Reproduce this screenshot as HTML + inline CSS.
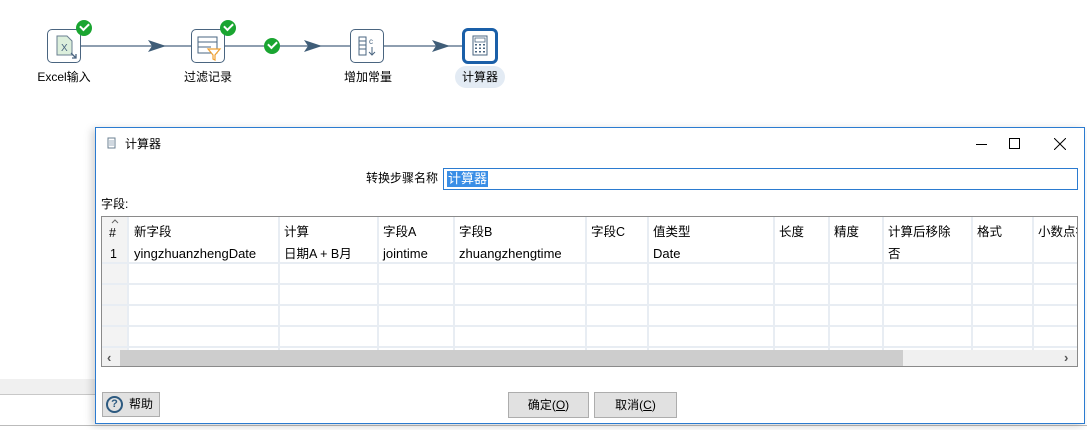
<!DOCTYPE html>
<html><head><meta charset="utf-8"><style>
*{margin:0;padding:0;box-sizing:border-box}
body{width:1087px;height:430px;position:relative;background:#fff;font-family:"Liberation Sans","Noto Sans CJK SC",sans-serif;font-size:12px;line-height:16px;color:#000;overflow:hidden}
.abs{position:absolute}
.lbl{position:absolute;top:69px;font-size:12px;white-space:nowrap;transform:translateX(-50%)}
.box{position:absolute;width:34px;height:34px;border:1px solid #4a6580;border-radius:5px;background:#fff}
.chk{position:absolute;width:16px;height:16px;border-radius:50%;background:#1aa531}
.chk:after{content:"";position:absolute;left:4px;top:3px;width:7px;height:4px;border-left:2px solid #fff;border-bottom:2px solid #fff;transform:rotate(-45deg)}
.dlg{position:absolute;left:95px;top:127px;width:990px;height:297px;border:1px solid #2b7bd0;background:#fff;box-shadow:-3px 2px 8px rgba(0,0,0,.18)}
.th,.td{position:absolute;white-space:nowrap;font-size:12.5px;line-height:16px;height:16px}
.btn{position:absolute;background:#e1e1e1;border:1px solid #adadad;text-align:center;font-size:12px}
</style></head><body>
<svg class="abs" style="left:0;top:0" width="520" height="100">
<line x1="80" y1="46" x2="462" y2="46" stroke="#4a6580" stroke-width="1.2"/>
<polygon points="148,40 166,46 148,52 152,46" fill="#3f5d78"/>
<polygon points="304,40 322,46 304,52 308,46" fill="#3f5d78"/>
<polygon points="432,40 450,46 432,52 436,46" fill="#3f5d78"/>
</svg>
<div class="box" style="left:47px;top:29px"></div>
<svg class="abs" style="left:47px;top:29px" width="34" height="34"><path d="M10 7h10l5 5v14H10z" fill="#dcefdc" stroke="#6a7f90"/><text x="14" y="22" font-size="10" fill="#4a6580" font-family="Liberation Sans">X</text><path d="M24 24l5 5M29 25v4h-4" stroke="#4a6580" fill="none" stroke-width="1.3"/></svg>
<div class="chk" style="left:76px;top:20px"></div>
<div class="box" style="left:191px;top:29px"></div>
<svg class="abs" style="left:191px;top:29px" width="34" height="34"><rect x="7" y="8" width="19" height="16" fill="none" stroke="#4a6580"/><path d="M7 13h19M7 18h13" stroke="#4a6580"/><path d="M17 20h12l-5 6v5l-2-1v-4z" fill="#fff" stroke="#f0a030" stroke-width="1.2"/></svg>
<div class="chk" style="left:220px;top:20px"></div>
<div class="chk" style="left:264px;top:38px"></div>
<div class="box" style="left:350px;top:29px"></div>
<svg class="abs" style="left:350px;top:29px" width="34" height="34"><rect x="9" y="8" width="7" height="18" fill="none" stroke="#4a6580"/><path d="M9 12h7M9 16h7M9 20h7" stroke="#4a6580"/><text x="19" y="15" font-size="8" fill="#4a6580">c</text><path d="M22 18v8M19 23l3 3 3-3" stroke="#4a6580" fill="none"/></svg>
<div class="box" style="left:462px;top:28px;width:36px;height:36px;border:3px solid #1a5fa8;border-radius:6px"></div>
<svg class="abs" style="left:462px;top:28px" width="36" height="36"><rect x="11" y="8" width="14" height="19" fill="none" stroke="#4a6580"/><rect x="13" y="10" width="10" height="4" fill="none" stroke="#4a6580" stroke-width=".8"/><g fill="#4a6580"><rect x="13" y="16" width="2" height="1.5"/><rect x="17" y="16" width="2" height="1.5"/><rect x="21" y="16" width="2" height="1.5"/><rect x="13" y="19.5" width="2" height="1.5"/><rect x="17" y="19.5" width="2" height="1.5"/><rect x="21" y="19.5" width="2" height="1.5"/><rect x="13" y="23" width="2" height="1.5"/><rect x="17" y="23" width="2" height="1.5"/><rect x="21" y="23" width="2" height="1.5"/></g></svg>
<div class="lbl" style="left:64px">Excel输入</div>
<div class="lbl" style="left:208px">过滤记录</div>
<div class="lbl" style="left:368px">增加常量</div>
<div class="abs" style="left:455px;top:66px;width:50px;height:22px;border-radius:11px;background:#e3ebf4"></div>
<div class="lbl" style="left:480px">计算器</div>
<div class="abs" style="left:0;top:379px;width:95px;height:16px;background:#f0f0f0;border-bottom:1px solid #c8c8c8"></div>
<div class="abs" style="left:0;top:425px;width:1087px;height:1px;background:#bbb"></div>
<div class="dlg">
 <svg class="abs" style="left:11px;top:9px" width="10" height="13"><rect x="1" y="1" width="7" height="10" fill="none" stroke="#6a7f90"/><path d="M2 4h5M2 6h5M2 8h5" stroke="#a0b0c0"/></svg>
 <div class="abs" style="left:29px;top:8px;font-size:12px">计算器</div>
 <div class="abs" style="left:880px;top:16px;width:11px;height:1px;background:#000"></div>
 <div class="abs" style="left:913px;top:10px;width:11px;height:11px;border:1px solid #000"></div>
 <svg class="abs" style="left:958px;top:10px" width="12" height="12"><path d="M0 0L12 12M12 0L0 12" stroke="#000"/></svg>
 <div class="abs" style="left:270px;top:42px">转换步骤名称</div>
 <div class="abs" style="left:347px;top:40px;width:635px;height:22px;border:1px solid #2b7bd0"><span style="position:absolute;left:3px;top:2px;background:#3a8ee6;color:#fff;padding:0 1px;font-size:13px;line-height:16px">计算器</span></div>
 <div class="abs" style="left:5px;top:68px">字段:</div>
 <div class="abs" style="left:5px;top:88px;width:977px;height:151px;border:1px solid #8a8a8a;overflow:hidden">
  <div class="abs" style="left:0;top:0;width:25px;height:133px;background:#f3f3f3"></div>
  <svg class="abs" style="left:0;top:0" width="977" height="150">
   <g stroke="#e8edf3" stroke-width="2">
    <line x1="0" y1="46" x2="977" y2="46"/><line x1="0" y1="67" x2="977" y2="67"/><line x1="0" y1="88" x2="977" y2="88"/><line x1="0" y1="109" x2="977" y2="109"/><line x1="0" y1="130" x2="977" y2="130"/>
    <line x1="26" y1="0" x2="26" y2="133"/><line x1="177" y1="0" x2="177" y2="133"/><line x1="276" y1="0" x2="276" y2="133"/><line x1="352" y1="0" x2="352" y2="133"/><line x1="484" y1="0" x2="484" y2="133"/><line x1="546" y1="0" x2="546" y2="133"/><line x1="672" y1="0" x2="672" y2="133"/><line x1="727" y1="0" x2="727" y2="133"/><line x1="781" y1="0" x2="781" y2="133"/><line x1="870" y1="0" x2="870" y2="133"/><line x1="931" y1="0" x2="931" y2="133"/>
   </g>
   <path d="M10 6l3-3 3 3" stroke="#666" fill="none"/>
  </svg>
  <div class="th" style="left:7px;top:8px">#</div>
  <div class="th" style="left:32px;top:7px">新字段</div>
  <div class="th" style="left:182px;top:7px">计算</div>
  <div class="th" style="left:281px;top:7px">字段A</div>
  <div class="th" style="left:357px;top:7px">字段B</div>
  <div class="th" style="left:489px;top:7px">字段C</div>
  <div class="th" style="left:551px;top:7px">值类型</div>
  <div class="th" style="left:677px;top:7px">长度</div>
  <div class="th" style="left:732px;top:7px">精度</div>
  <div class="th" style="left:786px;top:7px">计算后移除</div>
  <div class="th" style="left:875px;top:7px">格式</div>
  <div class="th" style="left:936px;top:7px">小数点符号</div>
  <div class="td" style="left:8px;top:29px">1</div>
  <div class="td" style="left:32px;top:29px;font-size:13px">yingzhuanzhengDate</div>
  <div class="td" style="left:182px;top:29px">日期A + B月</div>
  <div class="td" style="left:281px;top:29px;font-size:13px">jointime</div>
  <div class="td" style="left:357px;top:29px;font-size:13px">zhuangzhengtime</div>
  <div class="td" style="left:551px;top:29px;font-size:13px">Date</div>
  <div class="td" style="left:786px;top:29px">否</div>
  <div class="abs" style="left:0;top:133px;width:977px;height:16px;background:#f0f0f0"></div>
  <div class="abs" style="left:18px;top:133px;width:783px;height:16px;background:#cdcdcd"></div>
  <div class="abs" style="left:5px;top:133px;font-size:13px;color:#555;font-weight:bold">&lsaquo;</div>
  <div class="abs" style="left:962px;top:133px;font-size:13px;color:#555;font-weight:bold">&rsaquo;</div>
 </div>
 <div class="btn" style="left:6px;top:264px;width:58px;height:25px"><span style="position:absolute;left:3px;top:3px;width:17px;height:17px;border:2px solid #2d5a80;border-radius:50%;color:#2d5a80;font-weight:bold;font-size:11px;line-height:13px">?</span><span style="position:absolute;left:26px;top:3px;line-height:16px">帮助</span></div>
 <div class="btn" style="left:412px;top:264px;width:81px;height:26px;line-height:24px">确定(<u>O</u>)</div>
 <div class="btn" style="left:498px;top:264px;width:83px;height:26px;line-height:24px">取消(<u>C</u>)</div>
</div>
</body></html>
